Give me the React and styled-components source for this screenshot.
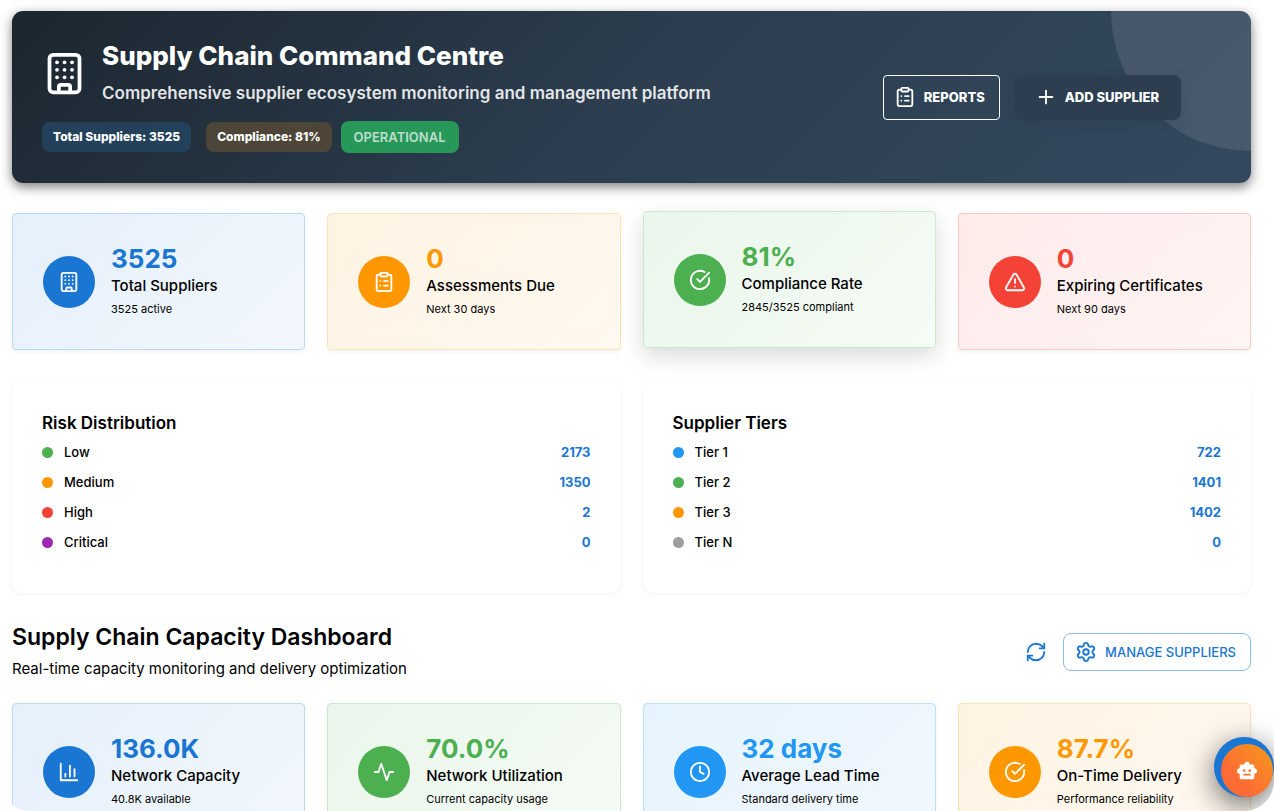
import React from "react";
import styled, { createGlobalStyle } from "styled-components";
import {
  Building,
  ClipboardList,
  CircleCheckBig,
  TriangleAlert,
  Clock,
  RefreshCw,
  Settings,
  Plus,
} from "lucide-react";
import { MdSmartToy } from "react-icons/md";

const GlobalStyle = createGlobalStyle`
  *, *::before, *::after { box-sizing: border-box; }
  body {
    margin: 0;
    background: #fff;
    color: #000;
    font-family: Inter, "Liberation Sans", sans-serif;
  }
  h1, h2, h3, p, ul, dl, dd { margin: 0; padding: 0; }
  button { font-family: inherit; cursor: pointer; }
`;

const Frame = styled.div`
  position: relative;
  height: 100vh;
  overflow: hidden;
  border-radius: 0 0 30px 30px;
`;

const Page = styled.main`
  height: 100%;
  overflow-y: auto;
  scrollbar-width: none;
  padding: 11px 23px 30px 12px;
`;

const HeroShadow = styled.div`
  margin-bottom: 30px;
  border-radius: 11px;
  box-shadow: 0 4px 12px rgba(0, 0, 0, 0.5);
`;

const Hero = styled.header`
  position: relative;
  overflow: hidden;
  display: flex;
  align-items: center;
  justify-content: space-between;
  padding: 30px 70px 30px 30px;
  border-radius: 11px;
  background: linear-gradient(135deg, #1c262f 0%, #2c3e50 50%, #34495e 100%);
  color: #fff;
`;

const HeroCircle = styled.span`
  position: absolute;
  top: -140px;
  right: -140px;
  width: 280px;
  height: 280px;
  border-radius: 50%;
  background: rgba(255, 255, 255, 0.1);
`;

const HeroMain = styled.div`
  display: flex;
  flex-direction: column;
  gap: 16px;
`;

const Brand = styled.div`
  display: flex;
  align-items: center;
  gap: 15px;
`;

const BrandText = styled.div`
  display: flex;
  flex-direction: column;
  gap: 10px;
`;

const HeroTitle = styled.h1`
  font-size: 26px;
  line-height: 30px;
  font-weight: 800;
`;

const HeroSubtitle = styled.p`
  font-size: 17px;
  line-height: 24px;
  font-weight: 600;
  color: rgba(255, 255, 255, 0.88);
`;

const ChipRow = styled.div`
  display: flex;
  align-items: center;
  gap: 15px;
`;

const Chip = styled.span`
  padding: 0 11px;
  border-radius: 8px;
  background: ${(p) => p.$fill};
  font-size: 12px;
  line-height: 30px;
  font-weight: 800;
`;

const StatusChip = styled(Chip)`
  margin-left: -6px;
  padding: 0 13px;
  font-size: 13px;
  line-height: 32px;
  font-weight: 600;
  color: rgba(255, 255, 255, 0.7);
`;

const HeroActions = styled.div`
  position: relative;
  display: flex;
  gap: 15px;
`;

const HeroButton = styled.button`
  display: flex;
  align-items: center;
  gap: 8px;
  height: 45px;
  padding: 0 ${(p) => (p.$solid ? 22 : 14)}px 0 ${(p) => (p.$solid ? 20 : 10)}px;
  border: ${(p) => (p.$solid ? "0" : "1px solid #fff")};
  border-radius: ${(p) => (p.$solid ? 8 : 4)}px;
  background: ${(p) => (p.$solid ? "#2c3e50" : "transparent")};
  box-shadow: ${(p) => (p.$solid ? "0 4px 11px rgba(44, 62, 80, 0.3)" : "none")};
  color: #fff;
  font-size: 13px;
  font-weight: 800;
`;

const CardGrid = styled.section`
  display: grid;
  grid-template-columns: repeat(4, 1fr);
  gap: 22px;
`;

const StatCard = styled.article`
  display: flex;
  align-items: center;
  gap: 16px;
  height: 137px;
  padding: 0 30px;
  border: 1px solid ${(p) => p.$tone.line};
  border-radius: 4px;
  background: linear-gradient(135deg, ${(p) => p.$tone.from}, ${(p) => p.$tone.to});
  box-shadow: ${(p) =>
    p.$raised ? "0 8px 22px rgba(0, 0, 0, 0.15)" : "0 2px 4px rgba(0, 0, 0, 0.05)"};
  transform: ${(p) => (p.$raised ? "translateY(-2px)" : "none")};
`;

const StatIcon = styled.span`
  display: grid;
  place-items: center;
  flex: none;
  width: 52px;
  height: 52px;
  border-radius: 50%;
  background: ${(p) => p.$fill};
  color: #fff;
`;

const StatText = styled.div`
  padding-bottom: 2px;
`;

const StatValue = styled.p`
  font-size: 26px;
  line-height: 32px;
  font-weight: 700;
  color: ${(p) => p.$color};
`;

const StatLabel = styled.h3`
  font-size: 15px;
  line-height: 22px;
  font-weight: 500;
`;

const StatNote = styled.p`
  margin-top: 2px;
  font-size: 11px;
  line-height: 20px;
`;

const PanelGrid = styled.section`
  display: grid;
  grid-template-columns: 1fr 1fr;
  gap: 22px;
  margin: 30px 0;
`;

const Panel = styled.article`
  padding: 30px 30px 36px;
  border-radius: 11px;
  background: #fff;
  box-shadow: 0 1px 4px rgba(0, 0, 0, 0.06);
`;

const PanelTitle = styled.h2`
  font-size: 17px;
  line-height: 27px;
  font-weight: 600;
`;

const Legend = styled.dl`
  display: flex;
  flex-direction: column;
`;

const LegendRow = styled.div`
  display: flex;
  align-items: center;
  justify-content: space-between;
  height: 30px;
  font-size: 13px;
`;

const LegendName = styled.dt`
  display: flex;
  align-items: center;
  gap: 11px;
  font-weight: 500;

  &::before {
    content: "";
    width: 11px;
    height: 11px;
    border-radius: 50%;
    background: ${(p) => p.$dot};
  }
`;

const LegendValue = styled.dd`
  font-weight: 700;
  color: #1976d2;
`;

const SectionHead = styled.header`
  display: flex;
  align-items: center;
  justify-content: space-between;
  margin-bottom: 23px;
`;

const SectionTitle = styled.h2`
  font-size: 23px;
  line-height: 28px;
  font-weight: 600;
`;

const SectionNote = styled.p`
  margin-top: 6px;
  font-size: 15px;
  line-height: 23px;
`;

const SectionActions = styled.div`
  display: flex;
  align-items: center;
  gap: 8px;
`;

const IconButton = styled.button`
  display: grid;
  place-items: center;
  width: 38px;
  height: 38px;
  padding: 0;
  border: 0;
  background: transparent;
  color: #1976d2;
`;

const OutlineButton = styled.button`
  display: flex;
  align-items: center;
  gap: 8px;
  height: 38px;
  padding: 0 14px 0 11px;
  border: 1px solid #8cbae8;
  border-radius: 8px;
  background: transparent;
  color: #1976d2;
  font-size: 13px;
  font-weight: 500;
`;

const ChatHalo = styled.div`
  position: absolute;
  right: 0;
  bottom: 14px;
  width: 60px;
  height: 60px;
  padding: 7px 0 0 7px;
  border-radius: 50%;
  background: #1976d2;
  box-shadow: 0 8px 30px rgba(0, 0, 0, 0.6);
`;

const ChatButton = styled.button`
  display: grid;
  place-items: center;
  width: 52px;
  height: 53px;
  padding: 0;
  border: 0;
  border-radius: 50%;
  background: linear-gradient(45deg, #ff6b35 30%, #f7931e 90%);
  color: #fff;
`;

function ColumnChartIcon({ size, strokeWidth }) {
  return (
    <svg width={size} height={size} viewBox="0 0 24 24" fill="none" stroke="currentColor" strokeWidth={strokeWidth} strokeLinecap="round" strokeLinejoin="round" aria-hidden="true">
      <path d="M3 3v18h18M8 17v-3M13 17V5M18 17V9" />
    </svg>
  );
}

function PulseIcon({ size, strokeWidth }) {
  return (
    <svg width={size} height={size} viewBox="0 0 24 24" fill="none" stroke="currentColor" strokeWidth={strokeWidth} strokeLinecap="round" strokeLinejoin="round" aria-hidden="true">
      <path d="M22 12h-4l-3 9L9 3l-3 9H2" />
    </svg>
  );
}

const tones = {
  blue: { main: "#1976d2", line: "#bcd8f2", from: "#e5f0fb", to: "#f3f7fd" },
  orange: { main: "#ff9800", line: "#ffe2b8", from: "#fff3e2", to: "#fff9f1" },
  green: { main: "#4caf50", line: "#cbe7cc", from: "#eaf6eb", to: "#f5fbf5" },
  red: { main: "#f44336", line: "#fcc9c6", from: "#feebea", to: "#fff5f4" },
  sky: { main: "#2196f3", line: "#bfe0fb", from: "#e5f4fe", to: "#f2f7fe" },
};

const supplierStats = [
  { tone: "blue", icon: Building, value: "3525", label: "Total Suppliers", note: "3525 active" },
  { tone: "orange", icon: ClipboardList, value: "0", label: "Assessments Due", note: "Next 30 days" },
  { tone: "green", icon: CircleCheckBig, value: "81%", label: "Compliance Rate", note: "2845/3525 compliant", raised: true },
  { tone: "red", icon: TriangleAlert, value: "0", label: "Expiring Certificates", note: "Next 90 days" },
];

const capacityStats = [
  { tone: "blue", icon: ColumnChartIcon, value: "136.0K", label: "Network Capacity", note: "40.8K available" },
  { tone: "green", icon: PulseIcon, value: "70.0%", label: "Network Utilization", note: "Current capacity usage" },
  { tone: "sky", icon: Clock, value: "32 days", label: "Average Lead Time", note: "Standard delivery time" },
  { tone: "orange", icon: CircleCheckBig, value: "87.7%", label: "On-Time Delivery", note: "Performance reliability" },
];

const panels = [
  {
    title: "Risk Distribution",
    rows: [
      ["Low", "2173", "#4caf50"],
      ["Medium", "1350", "#ff9800"],
      ["High", "2", "#f44336"],
      ["Critical", "0", "#9c27b0"],
    ],
  },
  {
    title: "Supplier Tiers",
    rows: [
      ["Tier 1", "722", "#2196f3"],
      ["Tier 2", "1401", "#4caf50"],
      ["Tier 3", "1402", "#ff9800"],
      ["Tier N", "0", "#9e9e9e"],
    ],
  },
];

function Stats({ items }) {
  return (
    <CardGrid>
      {items.map(({ tone, icon: Icon, value, label, note, raised }) => (
        <StatCard key={label} $tone={tones[tone]} $raised={raised}>
          <StatIcon $fill={tones[tone].main}>
            <Icon size={22} strokeWidth={2} />
          </StatIcon>
          <StatText>
            <StatValue $color={tones[tone].main}>{value}</StatValue>
            <StatLabel>{label}</StatLabel>
            <StatNote>{note}</StatNote>
          </StatText>
        </StatCard>
      ))}
    </CardGrid>
  );
}

export default function App() {
  return (
    <Frame>
      <GlobalStyle />
      <Page>
        <HeroShadow>
          <Hero>
            <HeroCircle />
            <HeroMain>
              <Brand>
                <Building size={45} />
                <BrandText>
                  <HeroTitle>Supply Chain Command Centre</HeroTitle>
                  <HeroSubtitle>
                    Comprehensive supplier ecosystem monitoring and management platform
                  </HeroSubtitle>
                </BrandText>
              </Brand>
              <ChipRow>
                <Chip $fill="#23415a">Total Suppliers: 3525</Chip>
                <Chip $fill="#4d4638">Compliance: 81%</Chip>
                <StatusChip $fill="#27985a">OPERATIONAL</StatusChip>
              </ChipRow>
            </HeroMain>
            <HeroActions>
              <HeroButton type="button">
                <ClipboardList size={22} />
                REPORTS
              </HeroButton>
              <HeroButton type="button" $solid>
                <Plus size={22} />
                ADD SUPPLIER
              </HeroButton>
            </HeroActions>
          </Hero>
        </HeroShadow>

        <Stats items={supplierStats} />

        <PanelGrid>
          {panels.map(({ title, rows }) => (
            <Panel key={title}>
              <PanelTitle>{title}</PanelTitle>
              <Legend>
                {rows.map(([name, count, dot]) => (
                  <LegendRow key={name}>
                    <LegendName $dot={dot}>{name}</LegendName>
                    <LegendValue>{count}</LegendValue>
                  </LegendRow>
                ))}
              </Legend>
            </Panel>
          ))}
        </PanelGrid>

        <SectionHead>
          <div>
            <SectionTitle>Supply Chain Capacity Dashboard</SectionTitle>
            <SectionNote>Real-time capacity monitoring and delivery optimization</SectionNote>
          </div>
          <SectionActions>
            <IconButton type="button" aria-label="Refresh">
              <RefreshCw size={22} />
            </IconButton>
            <OutlineButton type="button">
              <Settings size={22} />
              MANAGE SUPPLIERS
            </OutlineButton>
          </SectionActions>
        </SectionHead>
        <Stats items={capacityStats} />
      </Page>

      <ChatHalo>
        <ChatButton type="button" aria-label="Open assistant">
          <MdSmartToy size={22} />
        </ChatButton>
      </ChatHalo>
    </Frame>
  );
}
